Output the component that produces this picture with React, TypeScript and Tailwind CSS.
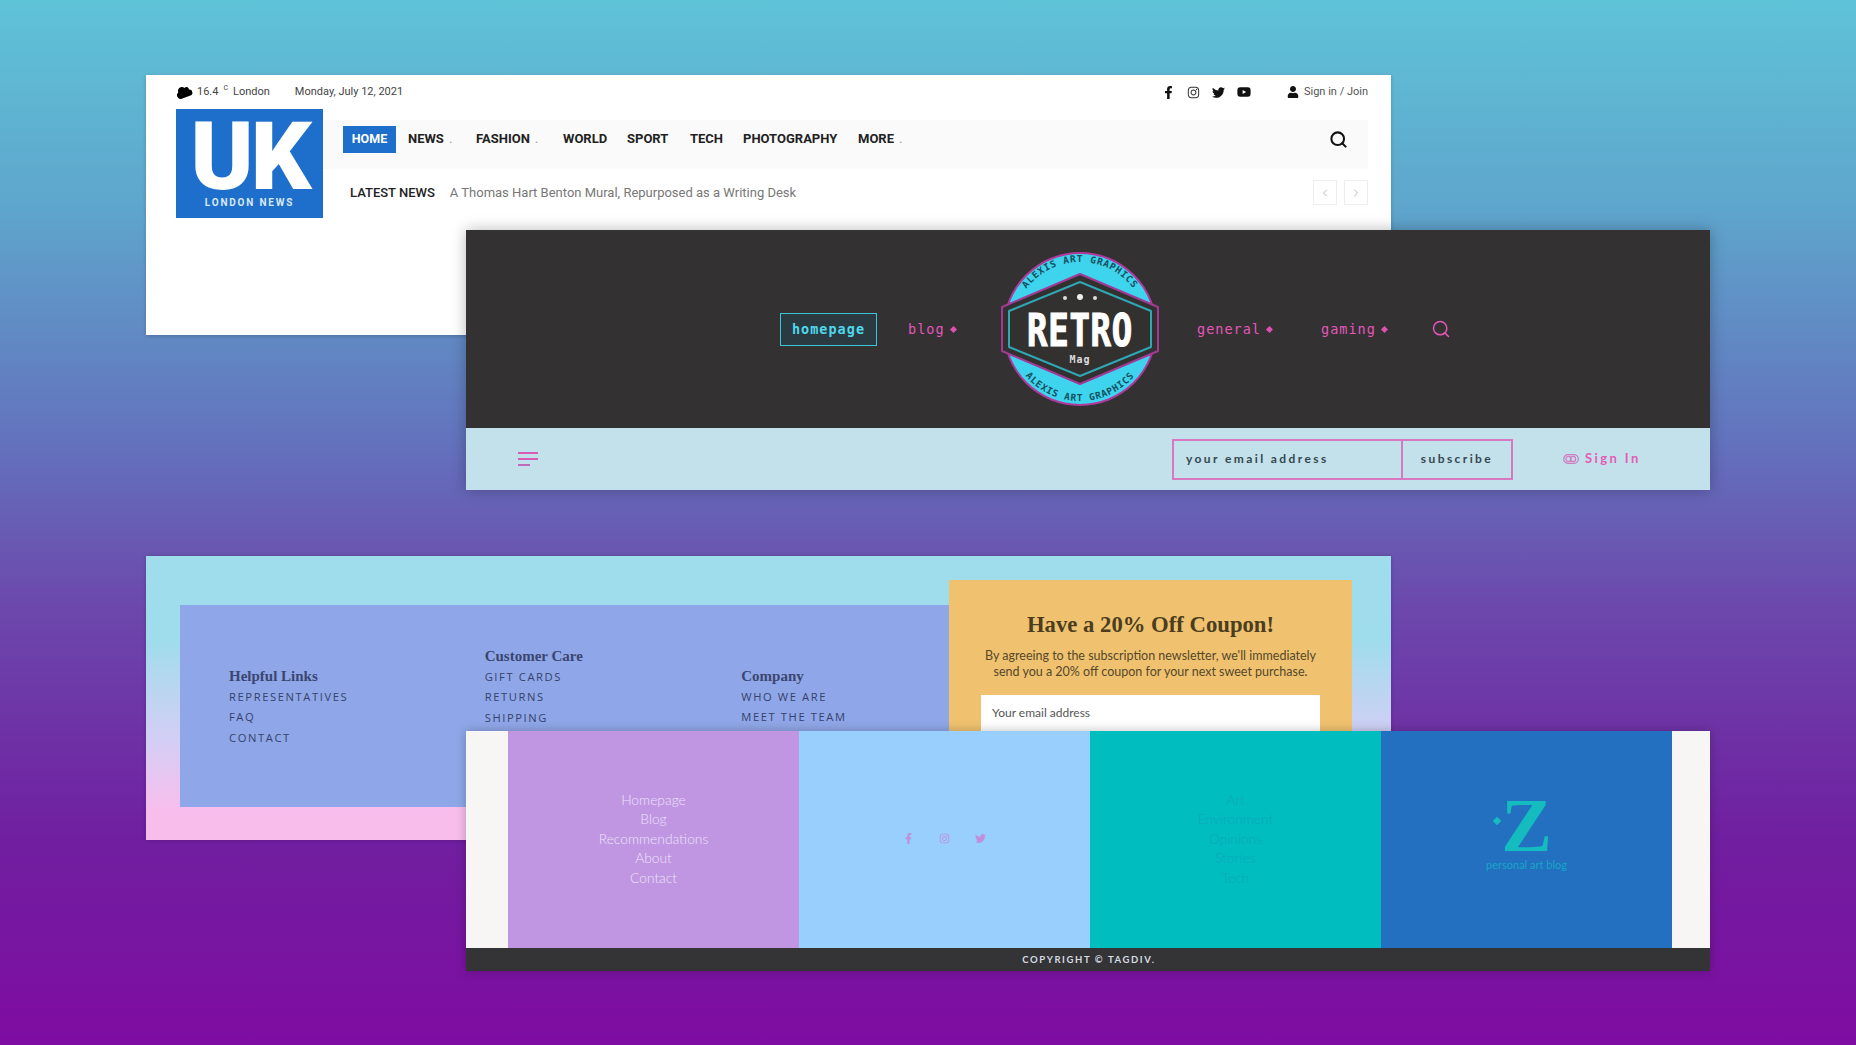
import { FaFacebookF, FaInstagram, FaTwitter, FaYoutube, FaUser, FaCloud } from "react-icons/fa";
import { ChevronLeft, ChevronRight, Search } from "lucide-react";

const nav: [string, boolean, string][] = [
  ["NEWS", true, "w-[68px]"],
  ["FASHION", true, "w-[87px]"],
  ["WORLD", false, "w-[64px]"],
  ["SPORT", false, "w-[63px]"],
  ["TECH", false, "w-[53px]"],
  ["PHOTOGRAPHY", false, "w-[115px]"],
  ["MORE", true, "w-[50px]"],
];

function NewsCard() {
  return (
    <section className="absolute left-[146px] top-[75px] h-[260px] w-[1245px] bg-white font-['Roboto',sans-serif] shadow-[0_1px_4px_rgba(0,0,0,0.2)]">
      <div className="flex h-[34px] items-center pl-[30px] pr-[23px] text-[11px] text-[#444]">
        <FaCloud className="mr-[5px] h-[16px] w-[16px] rotate-[-20deg] text-black" />
        <span>16.4</span>
        <span className="mb-[7px] ml-[5px] text-[7px]">C</span>
        <span className="ml-[5px]">London</span>
        <span className="ml-[25px]">Monday, July 12, 2021</span>
        <div className="ml-auto flex items-center gap-[12px] text-[#111]">
          <FaFacebookF className="h-[13px] w-[13px]" />
          <FaInstagram className="h-[13px] w-[13px] text-[#333]" />
          <FaTwitter className="h-[13px] w-[13px]" />
          <FaYoutube className="h-[14px] w-[14px]" />
        </div>
        <FaUser className="ml-[36px] mr-[5px] h-[12px] w-[12px] text-[#111]" />
        <span className="text-[#555]">Sign in / Join</span>
      </div>
      <div className="flex pl-[30px] pr-[23px]">
        <div className="flex h-[109px] w-[147px] shrink-0 flex-col items-center bg-[#1e6fcb] text-white">
          <span className="mt-[13px] h-[70px] text-[95px] font-black leading-[70px] tracking-[-3px]">UK</span>
          <span className="mt-[5px] text-[10px] font-bold leading-[12px] tracking-[1.8px] text-[#d8e8f8]">LONDON NEWS</span>
        </div>
        <div className="flex-1">
          <div className="mt-[11px] flex h-[49px] items-center bg-[#fafafa] pb-[11px] pl-[20px] pr-[20px] text-[13px] font-bold text-[#222]">
            <span className="mr-[12px] flex h-[27px] w-[53px] items-center justify-center bg-[#1e6fcb] text-[12.5px] text-white">HOME</span>
            {nav.map(([t, more, w]) => (
              <span key={t} className={w}>
                {t}
                {more && <span className="ml-[5px] font-normal text-[#999]">.</span>}
              </span>
            ))}
            <Search className="ml-auto h-[19px] w-[19px] text-[#111]" strokeWidth={2.6} />
          </div>
          <div className="mt-[10px] flex h-[27px] items-center pl-[27px] text-[13px]">
            <span className="font-medium text-[#222]">LATEST NEWS</span>
            <span className="ml-[15px] text-[#777]">A Thomas Hart Benton Mural, Repurposed as a Writing Desk</span>
            <div className="ml-auto flex gap-[7px] text-[#bbb]">
              <span className="flex h-[25px] w-[24px] items-center justify-center border border-[#eee]"><ChevronLeft className="h-[12px] w-[12px]" /></span>
              <span className="flex h-[25px] w-[24px] items-center justify-center border border-[#eee]"><ChevronRight className="h-[12px] w-[12px]" /></span>
            </div>
          </div>
        </div>
      </div>
    </section>
  );
}

function Dot() {
  return <span className="ml-[6px] inline-block h-[5px] w-[5px] rotate-45 bg-[#e04fb4] align-middle" />;
}

function RetroLogo() {
  return (
    <svg viewBox="0 0 160 156" className="h-[156px] w-[160px] shrink-0">
      <defs>
        <path id="arcTop" d="M 13 78 A 67 67 0 0 1 147 78" />
        <path id="arcBot" d="M 8 78 A 72 72 0 0 0 152 78" />
      </defs>
      <circle cx="80" cy="78" r="77" fill="#b03a9c" />
      <circle cx="80" cy="78" r="75" fill="#3fd4ee" />
      <text fill="#14505e" fontSize="9.5" fontWeight="700" fontFamily="'DejaVu Sans Mono', monospace" letterSpacing="0.8">
        <textPath href="#arcTop" startOffset="50%" textAnchor="middle">ALEXIS ART GRAPHICS</textPath>
      </text>
      <text fill="#14505e" fontSize="9.5" fontWeight="700" fontFamily="'DejaVu Sans Mono', monospace" letterSpacing="0.8">
        <textPath href="#arcBot" startOffset="50%" textAnchor="middle">ALEXIS ART GRAPHICS</textPath>
      </text>
      <polygon points="80,23 158,56 158,100 80,133 2,100 2,56" fill="#333030" stroke="#a13a96" strokeWidth="2" strokeLinejoin="round" />
      <polygon points="80,31 151,60 151,96 80,125 9,96 9,60" fill="#333030" stroke="#2fa7b4" strokeWidth="2" strokeLinejoin="round" />
      <circle cx="65" cy="47" r="2" fill="#ddd" />
      <circle cx="80" cy="46" r="3" fill="#eee" />
      <circle cx="95" cy="47" r="2" fill="#ddd" />
      <text x="80" y="95" textAnchor="middle" textLength="106" lengthAdjust="spacingAndGlyphs" fill="#fff" stroke="#fff" strokeWidth="1.2" fontSize="44" fontWeight="700" fontFamily="'DejaVu Sans Mono', monospace">RETRO</text>
      <text x="80" y="112" textAnchor="middle" fill="#ddd" fontSize="10" fontWeight="700" fontFamily="'DejaVu Sans Mono', monospace">Mag</text>
    </svg>
  );
}

function RetroCard() {
  return (
    <section className="absolute left-[466px] top-[230px] h-[260px] w-[1244px] shadow-[0_0_14px_rgba(0,0,0,0.28)]">
      <div className="flex h-[198px] items-center bg-[#333132] pl-[314px] font-['DejaVu_Sans_Mono',monospace] text-[13.5px] tracking-[1px] text-[#e457bb]">
        <span className="flex h-[33px] w-[97px] items-center justify-center border border-[#3dc4d6] bg-[#2b3a40] font-bold text-[#4fd8ec]">homepage</span>
        <span className="ml-[31px] w-[92px]">blog<Dot /></span>
        <RetroLogo />
        <span className="ml-[37px] w-[124px]">general<Dot /></span>
        <span className="w-[110px]">gaming<Dot /></span>
        <Search className="h-[20px] w-[20px]" strokeWidth={1.8} />
      </div>
      <div className="flex h-[62px] items-center bg-[#c2e1ea] pl-[52px] font-['Lato',sans-serif] text-[12px] font-bold tracking-[2.4px]">
        <div className="flex w-[20px] flex-col gap-[4px]">
          <span className="h-[2px] w-[20px] bg-[#d85cb4]" />
          <span className="h-[2px] w-[20px] bg-[#d85cb4]" />
          <span className="h-[2px] w-[12px] bg-[#c06cb8]" />
        </div>
        <div className="ml-[634px] flex h-[41px] w-[341px] border-2 border-[#d878c0] text-[#35474f]">
          <span className="flex w-[229px] items-center border-r-2 border-[#d878c0] pl-[12px]">your email address</span>
          <span className="flex flex-1 items-center justify-center">subscribe</span>
        </div>
        <svg viewBox="0 0 16 10" className="ml-[50px] h-[10px] w-[16px]" fill="none" stroke="#d07cc0" strokeWidth="1.2">
          <rect x="0.7" y="0.7" width="14.6" height="8.6" rx="4.3" />
          <circle cx="5.5" cy="5" r="2.6" />
          <circle cx="10" cy="5" r="2.6" />
        </svg>
        <span className="ml-[6px] text-[13px] text-[#e45cb8]">Sign In</span>
      </div>
    </section>
  );
}

const footerCols = [
  { title: "Helpful Links", items: ["REPRESENTATIVES", "FAQ", "CONTACT"], cls: "mt-[61px] w-[256px]" },
  { title: "Customer Care", items: ["GIFT CARDS", "RETURNS", "SHIPPING"], cls: "mt-[41px] w-[257px]" },
  { title: "Company", items: ["WHO WE ARE", "MEET THE TEAM"], cls: "mt-[61px] w-[208px]" },
];

function CouponCard() {
  return (
    <section className="absolute left-[146px] top-[556px] flex h-[284px] w-[1245px] bg-gradient-to-b from-[#9fdcec] from-30% via-[#d3cef5] via-[65%] to-[#f9bdec] to-90% pt-[49px] pl-[34px] shadow-[0_0_4px_rgba(0,0,0,0.2)]">
      <div className="flex h-[202px] w-[769px] bg-[#8fa7e8] pl-[49px]">
        {footerCols.map((c) => (
          <div key={c.title} className={c.cls}>
            <h3 className="font-['Liberation_Serif',serif] text-[15px] font-bold leading-[21px] text-[#3a4670]">{c.title}</h3>
            {c.items.map((i) => (
              <p key={i} className="font-['Open_Sans',sans-serif] text-[11.2px] leading-[20.3px] tracking-[1.6px] text-[#36426a]">{i}</p>
            ))}
          </div>
        ))}
      </div>
      <div className="-mt-[25px] h-[160px] w-[403px] bg-[#f0c26f] text-center">
        <h2 className="mt-[31px] font-['Liberation_Serif',serif] text-[22.7px] font-bold leading-[28px] text-[#4a3d20]">Have a 20% Off Coupon!</h2>
        <p className="mt-[9px] font-['Lato',sans-serif] text-[12.5px] leading-[15.5px] text-[#54482c]">
          By agreeing to the subscription newsletter, we'll immediately
          <br />
          send you a 20% off coupon for your next sweet purchase.
        </p>
        <div className="mx-[32px] mt-[16px] flex h-[36px] items-center bg-white pl-[11px] font-['Lato',sans-serif] text-[12px] text-[#555]">Your email address</div>
      </div>
    </section>
  );
}

function LinkList({ items, cls }: { items: string[]; cls: string }) {
  return (
    <div className={"flex w-[291px] flex-col items-center justify-center pb-[2px] font-['Lato',sans-serif] text-[13.8px] font-light leading-[19.4px] " + cls}>
      {items.map((i) => (
        <span key={i}>{i}</span>
      ))}
    </div>
  );
}

function BottomCard() {
  return (
    <section className="absolute left-[466px] top-[731px] h-[240px] w-[1244px] bg-[#f8f6f4] shadow-[0_0_10px_rgba(0,0,0,0.25)]">
      <div className="flex h-[217px] pl-[42px]">
        <LinkList cls="bg-[#c095e2] text-[#ece4fa]" items={["Homepage", "Blog", "Recommendations", "About", "Contact"]} />
        <div className="flex w-[291px] items-center justify-center gap-[25px] bg-[#99cffd] pb-[2px] text-[#c08fdc]">
          <FaFacebookF className="h-[11px] w-[11px]" />
          <FaInstagram className="h-[11px] w-[11px]" />
          <FaTwitter className="h-[11px] w-[11px]" />
        </div>
        <LinkList cls="bg-[#00bdbf] text-[#10a6ba]" items={["Art", "Environment", "Opinions", "Stories", "Tech"]} />
        <div className="flex w-[291px] flex-col items-center justify-center bg-[#2270bf] pb-[10px]">
          <div className="relative h-[54px]">
            <span className="block font-['Liberation_Serif',serif] text-[76px] font-bold leading-[54px] text-[#14bcc0]">Z</span>
            <span className="absolute -left-[7px] top-[20px] h-[6px] w-[6px] rotate-45 bg-[#14bcc0]" />
          </div>
          <span className="mt-[6px] font-['Lato',sans-serif] text-[11px] leading-[14px] text-[#17a6c9]">personal art blog</span>
        </div>
      </div>
      <div className="flex h-[23px] items-center justify-center bg-[#343335] pl-[2px] pt-[1px] font-['Lato',sans-serif] text-[9.5px] font-bold tracking-[1.6px] text-[#d5dde2]">
        COPYRIGHT © TAGDIV.
      </div>
    </section>
  );
}

export default function App() {
  return (
    <main className="relative h-[1045px] w-[1856px] overflow-hidden bg-[linear-gradient(180deg,#5fc3d8_0%,#5ea5cc_20%,#6373bd_42%,#6c48ac_58%,#701fa0_80%,#7f0ca2_100%)]">
      <NewsCard />
      <CouponCard />
      <RetroCard />
      <BottomCard />
    </main>
  );
}
